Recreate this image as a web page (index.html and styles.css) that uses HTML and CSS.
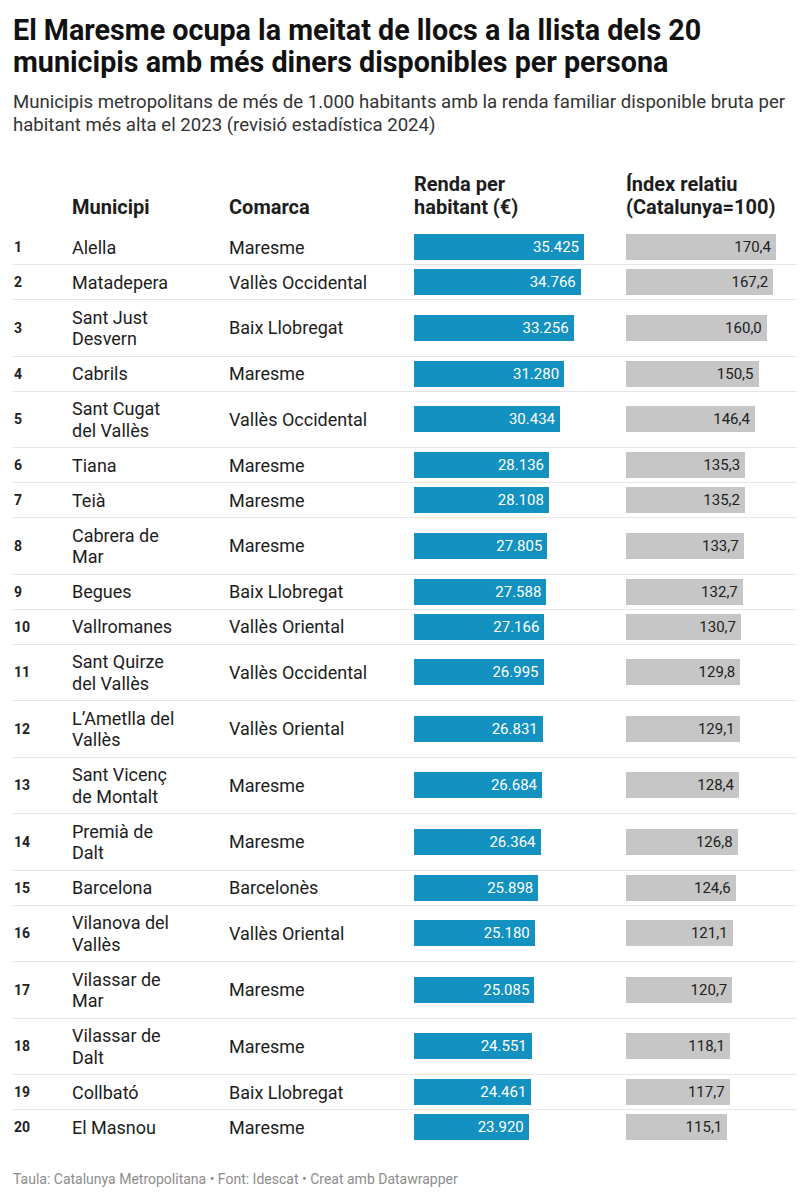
FILE: index.html
```html
<!DOCTYPE html>
<html lang="ca">
<head>
<meta charset="utf-8">
<title>Renda per habitant</title>
<link rel="stylesheet" href="styles.css">
</head>
<body>
<div class="chart">
  <h1 class="title">El Maresme ocupa la meitat de llocs a la llista dels 20 municipis amb més diners disponibles per persona</h1>
  <p class="subtitle">Municipis metropolitans de més de 1.000 habitants amb la renda familiar disponible bruta per habitant més alta el 2023 (revisió estadística 2024)</p>
  <table class="tbl">
    <colgroup>
      <col class="c-rank"><col class="c-mun"><col class="c-com"><col class="c-renda"><col class="c-idx">
    </colgroup>
    <thead>
      <tr>
        <th></th>
        <th>Municipi</th>
        <th>Comarca</th>
        <th>Renda per<br>habitant (€)</th>
        <th>Índex relatiu<br>(Catalunya=100)</th>
      </tr>
    </thead>
    <tbody>
      <tr><td class="rank">1</td><td class="txt"><span class="mun">Alella</span></td><td class="txt">Maresme</td><td class="bc"><div class="bar blue" style="width:170.0px">35.425</div></td><td class="bc"><div class="bar grey" style="width:150.0px">170,4</div></td></tr>
      <tr><td class="rank">2</td><td class="txt"><span class="mun">Matadepera</span></td><td class="txt">Vallès Occidental</td><td class="bc"><div class="bar blue" style="width:166.8px">34.766</div></td><td class="bc"><div class="bar grey" style="width:147.2px">167,2</div></td></tr>
      <tr><td class="rank">3</td><td class="txt"><span class="mun">Sant Just Desvern</span></td><td class="txt">Baix Llobregat</td><td class="bc"><div class="bar blue" style="width:159.6px">33.256</div></td><td class="bc"><div class="bar grey" style="width:140.8px">160,0</div></td></tr>
      <tr><td class="rank">4</td><td class="txt"><span class="mun">Cabrils</span></td><td class="txt">Maresme</td><td class="bc"><div class="bar blue" style="width:150.1px">31.280</div></td><td class="bc"><div class="bar grey" style="width:132.5px">150,5</div></td></tr>
      <tr><td class="rank">5</td><td class="txt"><span class="mun">Sant Cugat del Vallès</span></td><td class="txt">Vallès Occidental</td><td class="bc"><div class="bar blue" style="width:146.0px">30.434</div></td><td class="bc"><div class="bar grey" style="width:128.9px">146,4</div></td></tr>
      <tr><td class="rank">6</td><td class="txt"><span class="mun">Tiana</span></td><td class="txt">Maresme</td><td class="bc"><div class="bar blue" style="width:135.0px">28.136</div></td><td class="bc"><div class="bar grey" style="width:119.1px">135,3</div></td></tr>
      <tr><td class="rank">7</td><td class="txt"><span class="mun">Teià</span></td><td class="txt">Maresme</td><td class="bc"><div class="bar blue" style="width:134.9px">28.108</div></td><td class="bc"><div class="bar grey" style="width:119.0px">135,2</div></td></tr>
      <tr><td class="rank">8</td><td class="txt"><span class="mun">Cabrera de Mar</span></td><td class="txt">Maresme</td><td class="bc"><div class="bar blue" style="width:133.4px">27.805</div></td><td class="bc"><div class="bar grey" style="width:117.7px">133,7</div></td></tr>
      <tr><td class="rank">9</td><td class="txt"><span class="mun">Begues</span></td><td class="txt">Baix Llobregat</td><td class="bc"><div class="bar blue" style="width:132.4px">27.588</div></td><td class="bc"><div class="bar grey" style="width:116.8px">132,7</div></td></tr>
      <tr><td class="rank">10</td><td class="txt"><span class="mun">Vallromanes</span></td><td class="txt">Vallès Oriental</td><td class="bc"><div class="bar blue" style="width:130.4px">27.166</div></td><td class="bc"><div class="bar grey" style="width:115.0px">130,7</div></td></tr>
      <tr><td class="rank">11</td><td class="txt"><span class="mun">Sant Quirze del Vallès</span></td><td class="txt">Vallès Occidental</td><td class="bc"><div class="bar blue" style="width:129.5px">26.995</div></td><td class="bc"><div class="bar grey" style="width:114.3px">129,8</div></td></tr>
      <tr><td class="rank">12</td><td class="txt"><span class="mun">L’Ametlla del Vallès</span></td><td class="txt">Vallès Oriental</td><td class="bc"><div class="bar blue" style="width:128.8px">26.831</div></td><td class="bc"><div class="bar grey" style="width:113.6px">129,1</div></td></tr>
      <tr><td class="rank">13</td><td class="txt"><span class="mun">Sant Vicenç de Montalt</span></td><td class="txt">Maresme</td><td class="bc"><div class="bar blue" style="width:128.0px">26.684</div></td><td class="bc"><div class="bar grey" style="width:113.0px">128,4</div></td></tr>
      <tr><td class="rank">14</td><td class="txt"><span class="mun">Premià de Dalt</span></td><td class="txt">Maresme</td><td class="bc"><div class="bar blue" style="width:126.5px">26.364</div></td><td class="bc"><div class="bar grey" style="width:111.6px">126,8</div></td></tr>
      <tr><td class="rank">15</td><td class="txt"><span class="mun">Barcelona</span></td><td class="txt">Barcelonès</td><td class="bc"><div class="bar blue" style="width:124.3px">25.898</div></td><td class="bc"><div class="bar grey" style="width:109.7px">124,6</div></td></tr>
      <tr><td class="rank">16</td><td class="txt"><span class="mun">Vilanova del Vallès</span></td><td class="txt">Vallès Oriental</td><td class="bc"><div class="bar blue" style="width:120.8px">25.180</div></td><td class="bc"><div class="bar grey" style="width:106.6px">121,1</div></td></tr>
      <tr><td class="rank">17</td><td class="txt"><span class="mun">Vilassar de Mar</span></td><td class="txt">Maresme</td><td class="bc"><div class="bar blue" style="width:120.4px">25.085</div></td><td class="bc"><div class="bar grey" style="width:106.3px">120,7</div></td></tr>
      <tr><td class="rank">18</td><td class="txt"><span class="mun">Vilassar de Dalt</span></td><td class="txt">Maresme</td><td class="bc"><div class="bar blue" style="width:117.8px">24.551</div></td><td class="bc"><div class="bar grey" style="width:104.0px">118,1</div></td></tr>
      <tr><td class="rank">19</td><td class="txt"><span class="mun">Collbató</span></td><td class="txt">Baix Llobregat</td><td class="bc"><div class="bar blue" style="width:117.4px">24.461</div></td><td class="bc"><div class="bar grey" style="width:103.6px">117,7</div></td></tr>
      <tr class="last"><td class="rank">20</td><td class="txt"><span class="mun">El Masnou</span></td><td class="txt">Maresme</td><td class="bc"><div class="bar blue" style="width:114.8px">23.920</div></td><td class="bc"><div class="bar grey" style="width:101.3px">115,1</div></td></tr>
    </tbody>
  </table>
  <p class="footer">Taula: Catalunya Metropolitana • Font: Idescat • Creat amb Datawrapper</p>
</div>
</body>
</html>
```
FILE: styles.css
```css
html, body {
  margin: 0;
  padding: 0;
  background: #ffffff;
}
body {
  font-family: Roboto, "Liberation Sans", Arial, sans-serif;
  color: #1d1d1d;
}
.chart {
  padding: 14px 13px 0 13px;
}
.title {
  margin: 0;
  font-size: 28.7px;
  line-height: 32px;
  font-weight: 700;
  color: #111111;
}
.subtitle {
  margin: 13px 0 0 0;
  font-size: 18.6px;
  line-height: 23px;
  color: #333333;
}
.tbl {
  margin-top: 36px;
  width: 784px;
  border-collapse: collapse;
  table-layout: fixed;
}
.c-rank { width: 59px; }
.c-mun { width: 157px; }
.c-com { width: 185px; }
.c-renda { width: 212px; }
.c-idx { width: 171px; }
.tbl th {
  text-align: left;
  vertical-align: bottom;
  font-size: 20px;
  line-height: 23px;
  font-weight: 700;
  color: #1d1d1d;
  padding: 0 0 11px 0;
}
.tbl td {
  border-bottom: 1px solid #e6e6e6;
  vertical-align: middle;
  padding: 0;
}
.tbl tr.last td {
  border-bottom: none;
}
.rank {
  font-size: 14px;
  font-weight: 700;
  color: #222222;
  padding-left: 1px !important;
}
.txt {
  font-size: 18px;
  line-height: 21.5px;
  padding: 6.5px 0 6px 0 !important;
}
.mun {
  display: block;
  max-width: 108px;
}
.bc {
  padding: 4px 0 !important;
}
.bar {
  height: 26px;
  line-height: 26px;
  box-sizing: border-box;
  padding-right: 5px;
  text-align: right;
  font-size: 15px;
  white-space: nowrap;
}
.blue {
  background: #1391c1;
  color: #ffffff;
}
.grey {
  background: #c6c6c6;
  color: #222222;
}
.footer {
  margin: 26px 0 0 0;
  font-size: 14px;
  line-height: 18px;
  color: #8c8c8c;
}
```
